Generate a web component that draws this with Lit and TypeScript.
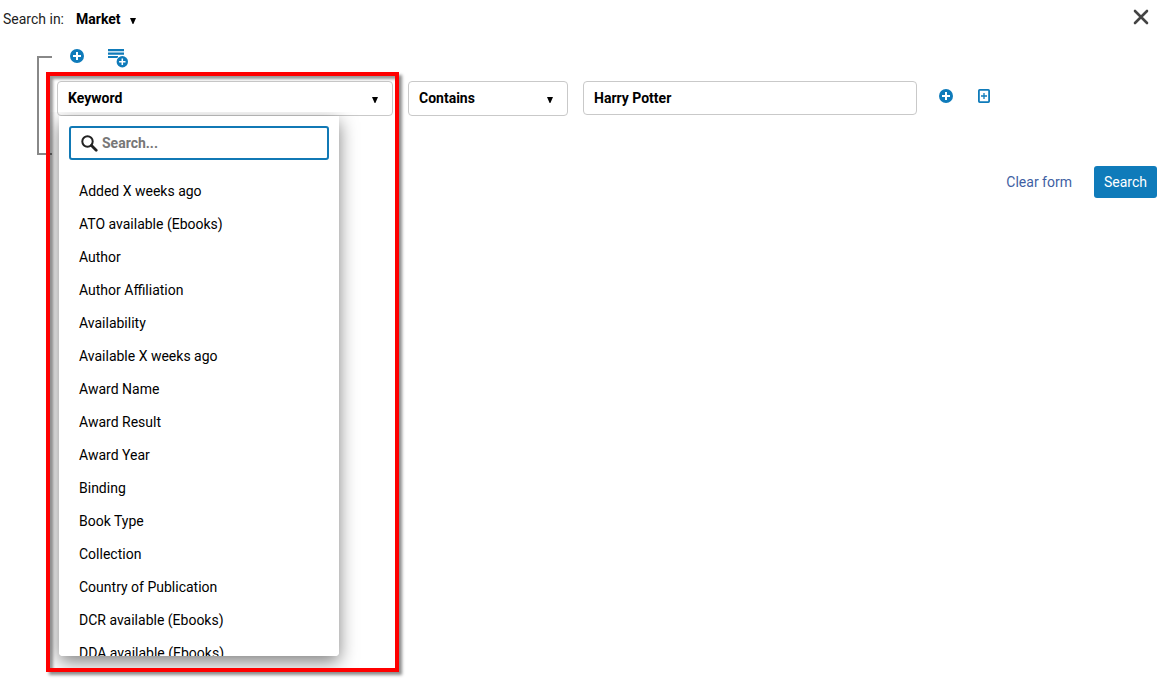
import { LitElement, html, css, svg } from "lit";
import { customElement, state } from "lit/decorators.js";

const FIELDS = [
  "Added X weeks ago",
  "ATO available (Ebooks)",
  "Author",
  "Author Affiliation",
  "Availability",
  "Available X weeks ago",
  "Award Name",
  "Award Result",
  "Award Year",
  "Binding",
  "Book Type",
  "Collection",
  "Country of Publication",
  "DCR available (Ebooks)",
  "DDA available (Ebooks)",
];

const arrow = html`<svg class="arrow" width="8" height="8" viewBox="0 0 8 8" aria-hidden="true">
  <path d="M1 1h6L4.400 7h-.8z" fill="currentColor" />
</svg>`;

const plusCircle = svg`<circle cx="7" cy="7" r="7" fill="#0f7bba" />
  <path d="M7 3v8M3 7h8" stroke="#fff" stroke-width="2" />`;

const plusIcon = html`<svg width="14" height="14" viewBox="0 0 14 14" aria-hidden="true">${plusCircle}</svg>`;

const groupIcon = html`<svg width="20" height="19" viewBox="0 0 20 19" aria-hidden="true">
  <path d="M0 0h16v2.200H0zM0 3.500h16v2.200H0zM0 7h10v2H0z" fill="#0f7bba" />
  <circle cx="14.300" cy="12.700" r="6.400" fill="#fff" />
  <circle cx="14.300" cy="12.700" r="5.700" fill="#0f7bba" />
  <path d="M14.300 9.500v6.400M11.100 12.700h6.400" stroke="#fff" stroke-width="1.500" />
</svg>`;

const pageIcon = html`<svg width="12" height="14" viewBox="0 0 12 14" aria-hidden="true">
  <rect x="0.900" y="0.900" width="10.200" height="12.200" rx="0.800" fill="#fff" stroke="#0f7bba" stroke-width="1.800" />
  <path d="M6 4v6M3 7h6" stroke="#0f7bba" stroke-width="1.300" />
</svg>`;

@customElement("app-root")
export class AppRoot extends LitElement {
  @state() private open = true;
  @state() private filter = "";
  @state() private field = "Keyword";

  static styles = css`
    :host {
      display: block;
      min-height: 100vh;
      font: 14px/20px Roboto, sans-serif;
      color: #000;
      background: #fff;
    }
    * {
      box-sizing: border-box;
    }
    button,
    input,
    select {
      font: inherit;
      color: inherit;
      margin: 0;
      padding: 0;
      border: 0;
      background: none;
      outline: 0;
    }
    button {
      cursor: pointer;
    }
    svg {
      display: block;
      flex: none;
    }
    .header {
      display: flex;
      align-items: center;
      height: 38px;
      padding: 0 12px 0 3px;
    }
    .scope-label {
      margin-right: 12px;
      color: #222;
    }
    .picker {
      position: relative;
      display: flex;
      align-items: center;
    }
    .picker select {
      appearance: none;
      font-weight: 700;
      cursor: pointer;
    }
    .picker .arrow {
      position: absolute;
      pointer-events: none;
    }
    .scope select {
      padding-right: 16px;
    }
    .scope .arrow {
      right: 0;
      top: 8px;
    }
    .close {
      margin-left: auto;
      padding: 0 0 4px;
    }
    .group {
      display: flex;
      padding-left: 37px;
    }
    .bracket {
      flex: none;
      width: 15px;
      margin-top: 18px;
      border: 2px solid #888;
      border-right: 0;
    }
    .rules {
      flex: 1;
      min-width: 0;
      padding: 0 4px 39px 5px;
    }
    .tools {
      display: flex;
      align-items: center;
      gap: 24px;
      height: 36px;
      margin-bottom: 7px;
      padding-left: 13px;
    }
    .tools .add-group {
      padding-top: 4px;
    }
    .rule {
      display: grid;
      grid-template-columns: minmax(0, 336px) minmax(0, 160px) minmax(0, 334px) auto;
      justify-content: start;
      column-gap: 15px;
      align-items: start;
    }
    .field {
      position: relative;
    }
    .box {
      width: 100%;
      height: 35px;
      padding: 0 10px;
      border: 1px solid #c9c9c9;
      border-radius: 4px;
      font-weight: 700;
    }
    .field-button {
      display: flex;
      align-items: center;
      justify-content: space-between;
      padding: 0 13px 2px 10px;
    }
    .field-button .arrow {
      margin-top: 5px;
    }
    .operator .arrow {
      right: 14px;
      top: 15px;
    }
    .operator select.box {
      padding: 0 30px 2px 10px;
    }
    input.box {
      height: 34px;
    }
    .actions {
      display: flex;
      align-items: center;
      gap: 25px;
      height: 30px;
      padding-left: 7px;
    }
    .popup,
    .popup-shadow {
      position: absolute;
      top: 35px;
      left: 2px;
      width: 280px;
      height: 540px;
      border-radius: 0 0 4px 4px;
    }
    .popup {
      padding-top: 10px;
      overflow: hidden;
      background: #fff;
    }
    .popup-shadow {
      box-shadow: 0 6px 18px rgba(0, 0, 0, 0.5);
      clip-path: inset(-4px -56px -12px -9px);
    }
    .find {
      display: flex;
      align-items: center;
      gap: 4px;
      height: 34px;
      margin: 0 10px 15px;
      padding: 0 10px;
      border: 2px solid #1179b5;
      border-radius: 3px;
    }
    .find input {
      flex: 1;
      min-width: 0;
      font-weight: 700;
    }
    .find input::placeholder {
      color: #777;
      opacity: 1;
    }
    .options {
      margin: 0;
      padding: 0;
      list-style: none;
    }
    .option {
      padding: 0 20px;
      line-height: 33px;
      cursor: pointer;
    }
    .highlight {
      position: absolute;
      top: -9px;
      left: -11px;
      width: 353px;
      height: 600px;
      border: 4px solid #f00;
      box-shadow: 3px 3px 3px rgba(0, 0, 0, 0.45), inset 3px 3px 3px rgba(0, 0, 0, 0.4);
      pointer-events: none;
    }
    .footer {
      display: flex;
      justify-content: flex-end;
      align-items: center;
      gap: 22px;
      padding: 11px 4px 0 0;
    }
    .clear {
      color: #3f5fa3;
      text-decoration: none;
    }
    .submit {
      height: 32px;
      padding: 0 10px;
      border-radius: 3px;
      background: #0f7bba;
      color: #fff;
    }
  `;

  private choose(name: string) {
    this.field = name;
    this.open = false;
  }

  render() {
    const shown = FIELDS.filter((f) => f.toLowerCase().includes(this.filter.toLowerCase()));
    return html`
      <header class="header">
        <label class="scope-label" for="scope">Search in:</label>
        <div class="picker scope">
          <select id="scope"><option>Market</option></select>
          ${arrow}
        </div>
        <button class="close" type="button" aria-label="Close">
          <svg width="16" height="16" viewBox="0 0 16 16" aria-hidden="true">
            <path d="M2 2l12 12M14 2L2 14" stroke="#444" stroke-width="2.600" stroke-linecap="round" />
          </svg>
        </button>
      </header>
      <section class="group">
        <div class="bracket"></div>
        <div class="rules">
          <div class="tools">
            <button type="button" aria-label="Add rule">${plusIcon}</button>
            <button class="add-group" type="button" aria-label="Add group">${groupIcon}</button>
          </div>
          <div class="rule">
            <div class="field">
              <button
                class="box field-button"
                type="button"
                aria-haspopup="listbox"
                aria-expanded=${this.open ? "true" : "false"}
                @click=${() => (this.open = !this.open)}
              >
                <span>${this.field}</span>${arrow}
              </button>
              ${this.open
                ? html`<div class="popup-shadow"></div>
                    <div class="highlight"></div>
                    <div class="popup">
                      <label class="find">
                        <svg width="17" height="17" viewBox="0 0 17 17" aria-hidden="true">
                          <circle cx="6.500" cy="6.500" r="5.200" fill="none" stroke="#222" stroke-width="2" />
                          <path d="M10.500 10.500l4.700 4.700" stroke="#222" stroke-width="2.800" stroke-linecap="round" />
                        </svg>
                        <input
                          type="text"
                          placeholder="Search..."
                          aria-label="Search fields"
                          @input=${(e: Event) => (this.filter = (e.target as HTMLInputElement).value)}
                        />
                      </label>
                      <ul class="options" role="listbox" aria-label="Fields">
                        ${shown.map(
                          (f) => html`<li class="option" role="option" @click=${() => this.choose(f)}>${f}</li>`
                        )}
                      </ul>
                    </div>`
                : null}
            </div>
            <div class="picker operator">
              <select class="box" aria-label="Operator"><option>Contains</option></select>
              ${arrow}
            </div>
            <input class="box" type="text" aria-label="Search term" value="Harry Potter" />
            <div class="actions">
              <button type="button" aria-label="Add rule after">${plusIcon}</button>
              <button type="button" aria-label="Add nested group">${pageIcon}</button>
            </div>
          </div>
        </div>
      </section>
      <footer class="footer">
        <a class="clear" href="#">Clear form</a>
        <button class="submit" type="button">Search</button>
      </footer>
    `;
  }
}
